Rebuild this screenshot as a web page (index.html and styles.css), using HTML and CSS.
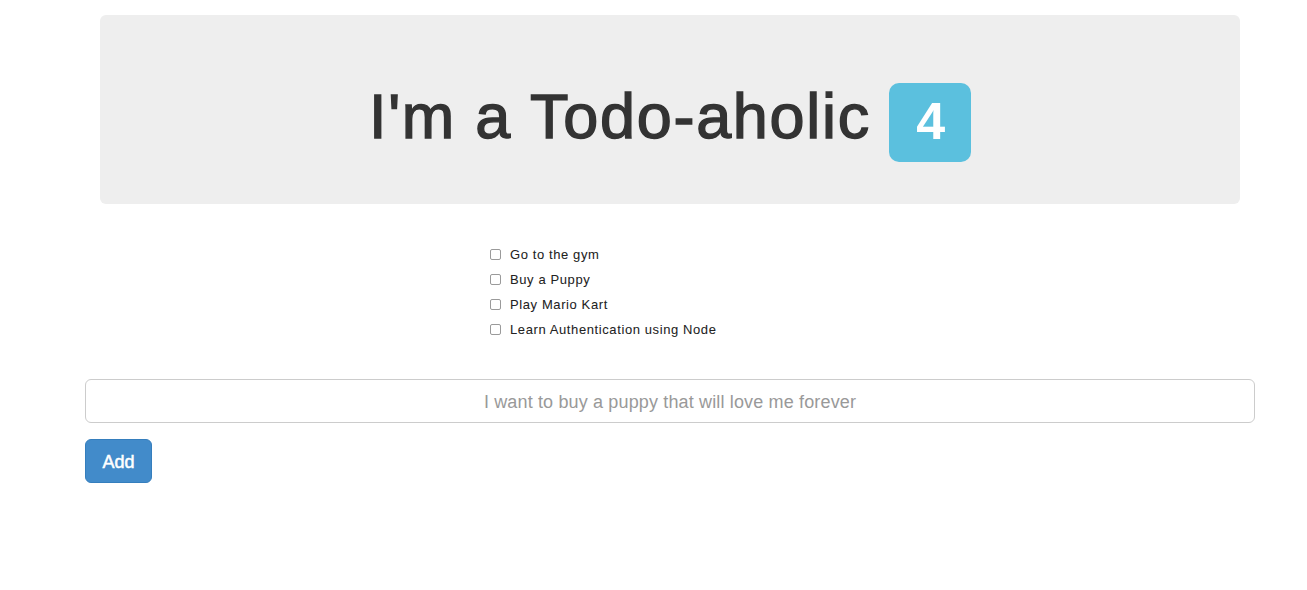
FILE: index.html
```html
<!DOCTYPE html>
<html>
<head>
<meta charset="utf-8">
<link rel="stylesheet" href="styles.css">
</head>
<body>
<div class="page">
  <div class="jumbotron">
    <h1 class="title">I'm a Todo-aholic <span class="badge">4</span></h1>
  </div>
  <ul class="todos">
    <li class="todo"><span class="check"></span><span>Go to the gym</span></li>
    <li class="todo"><span class="check"></span><span>Buy a Puppy</span></li>
    <li class="todo"><span class="check"></span><span>Play Mario Kart</span></li>
    <li class="todo"><span class="check"></span><span>Learn Authentication using Node</span></li>
  </ul>
  <form class="add-form">
    <input class="todo-input" type="text" placeholder="I want to buy a puppy that will love me forever">
    <button class="btn-add" type="button">Add</button>
  </form>
</div>
</body>
</html>
```
FILE: styles.css
```css
html, body {
  margin: 0;
  padding: 0;
  background: #fff;
  font-family: "Liberation Sans", Arial, sans-serif;
  color: #333;
}
.page {
  width: 1170px;
  margin-left: 85px;
  padding-top: 15px;
}
.jumbotron {
  margin: 0 15px;
  height: 189px;
  box-sizing: border-box;
  padding-top: 67px;
  background: #eeeeee;
  border-radius: 6px;
  text-align: center;
}
.title {
  margin: 0;
  font-size: 63px;
  font-weight: 400;
  line-height: 69px;
  color: #333;
  letter-spacing: 1.7px;
  -webkit-text-stroke: 1.4px #333;
}
.badge {
  display: inline-block;
  vertical-align: -0.5px;
  margin-left: -1px;
  font-size: 52px;
  font-weight: 700;
  line-height: 52px;
  letter-spacing: 0;
  color: #fff;
  -webkit-text-stroke: 0;
  background: #5bc0de;
  border-radius: 10px;
  padding: 12px 26px 15px 27px;
}
.todos {
  list-style: none;
  margin: 0;
  padding: 0 0 0 405px;
  margin-top: 38px;
}
.todo {
  display: flex;
  align-items: center;
  height: 25px;
  font-size: 13px;
  letter-spacing: 0.6px;
  color: #222;
  -webkit-text-stroke: 0.05px #222;
}
.check {
  width: 11px;
  height: 11px;
  box-sizing: border-box;
  border: 1px solid #9a9a9a;
  border-radius: 2px;
  background: #fff;
  margin-right: 9px;
}
.add-form {
  margin-top: 37px;
  display: flex;
  flex-direction: column;
  align-items: flex-start;
  gap: 16px;
}
.todo-input {
  box-sizing: border-box;
  width: 1170px;
  height: 44px;
  border: 1px solid #ccc;
  border-radius: 6px;
  font-family: "Liberation Sans", Arial, sans-serif;
  font-size: 18px;
  letter-spacing: 0.15px;
  text-align: center;
  color: #555;
  padding: 2px 16px 0;
  margin: 0;
  outline: none;
}
.todo-input::placeholder {
  color: #999;
}
.btn-add {
  box-sizing: border-box;
  width: 67px;
  height: 44px;
  background: #428bca;
  border: 1px solid #357ebd;
  border-radius: 6px;
  color: #fff;
  font-family: "Liberation Sans", Arial, sans-serif;
  font-size: 18px;
  -webkit-text-stroke: 0.5px #fff;
  padding: 3px 0 0;
  margin: 0;
}
```
